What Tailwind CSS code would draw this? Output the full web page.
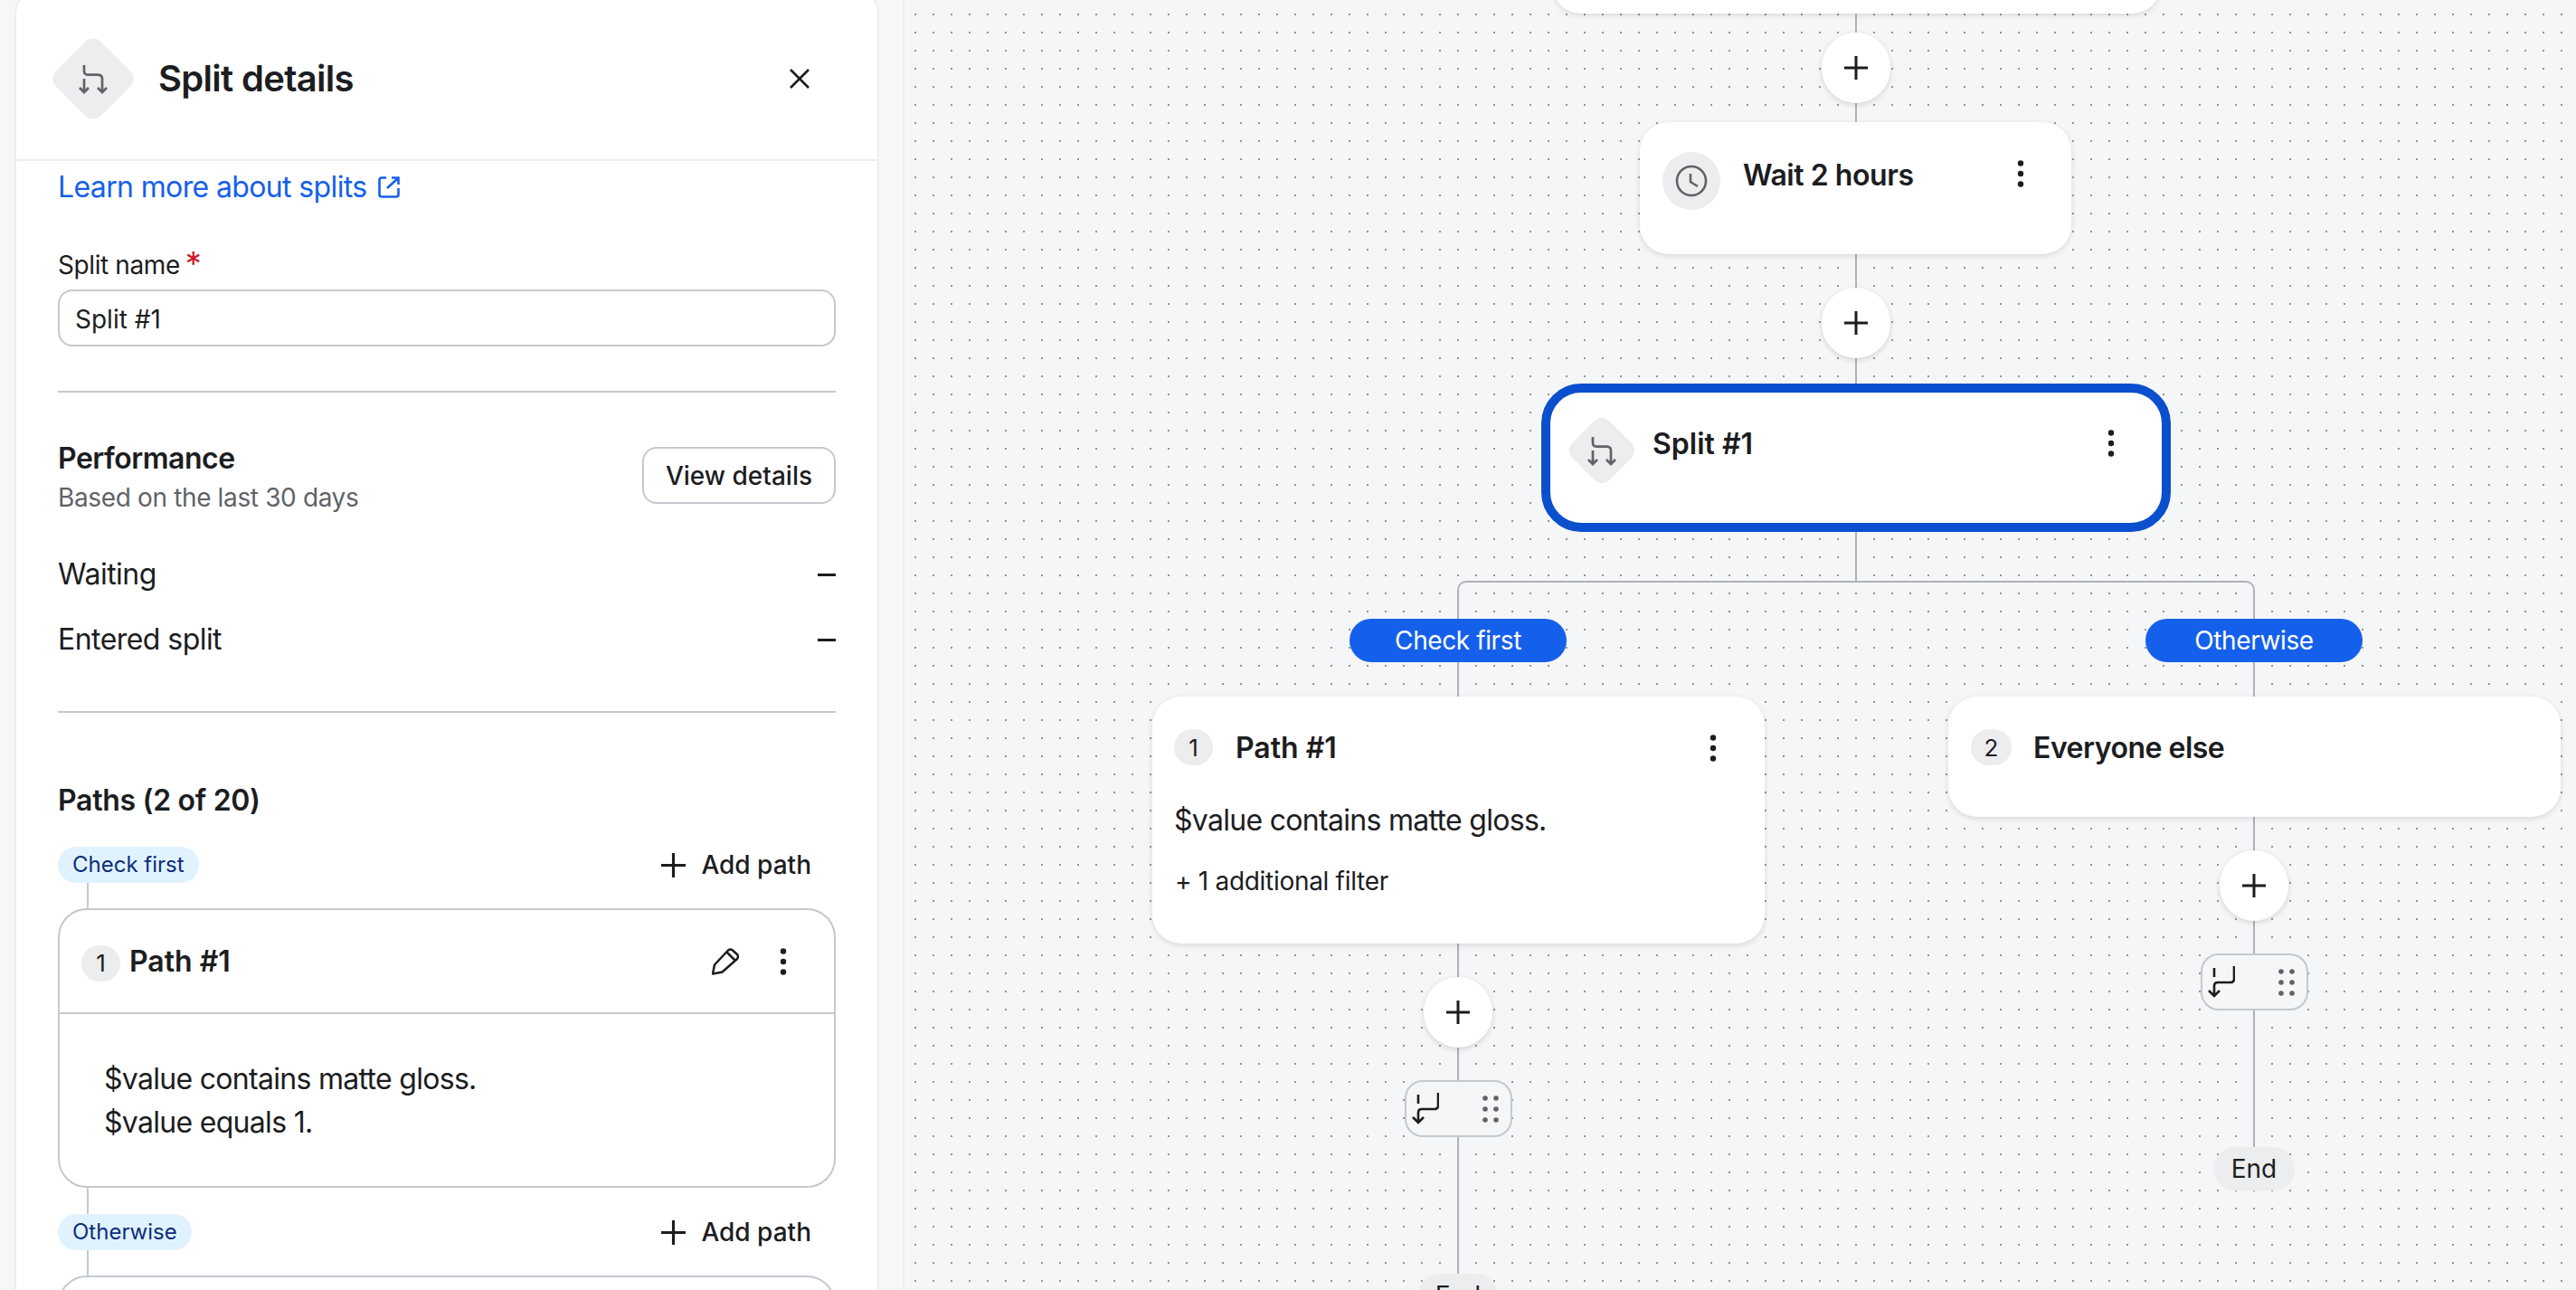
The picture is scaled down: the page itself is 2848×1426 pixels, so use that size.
<!DOCTYPE html>
<html lang="en">
<head>
  <meta charset="UTF-8" />
  <title>Split details</title>
  <script src="https://cdn.jsdelivr.net/npm/@tailwindcss/browser@4"></script>
</head>
<body class="m-0 h-screen overflow-hidden bg-[#f6f7f9] font-['Inter',sans-serif] text-[#1c1d1f]">
  <svg class="hidden">
    <symbol id="split" viewBox="-1 -1 34 34" fill="none" stroke="currentColor" stroke-width="2.7">
      <path d="M6 1V7.7Q6 11.7 11 11.7H21Q26 11.7 26 16V31M6 16V31M1 26L6 31L11 26M21 26L26 31L31 26" />
    </symbol>
    <symbol id="plus" viewBox="0 0 26 26" fill="none" stroke="currentColor" stroke-width="3">
      <path d="M13 0V26M0 13H26" />
    </symbol>
    <symbol id="dots" viewBox="0 0 10 30" fill="currentColor">
      <circle cx="5" cy="3.5" r="3.2" /><circle cx="5" cy="15" r="3.2" /><circle cx="5" cy="26.5" r="3.2" />
    </symbol>
    <symbol id="merge" viewBox="0 0 30 36" fill="none" stroke="currentColor" stroke-width="2.6">
      <path d="M7 2V12M29 0V14Q29 18 25 18H11Q7 18 7 22V33M1 27L7 33L13 27" />
    </symbol>
    <symbol id="grip" viewBox="0 0 18 30" fill="#5f6368">
      <circle cx="3" cy="3" r="2.8" /><circle cx="15" cy="3" r="2.8" />
      <circle cx="3" cy="15" r="2.8" /><circle cx="15" cy="15" r="2.8" />
      <circle cx="3" cy="27" r="2.8" /><circle cx="15" cy="27" r="2.8" />
    </symbol>
  </svg>

  <div class="flex h-screen overflow-hidden">
    <!-- details panel -->
    <div class="w-[1000px] shrink-0 pl-4 border-r-2 border-[#eceef0] overflow-hidden">
      <aside class="w-[956px] -mt-4 h-[1500px] bg-white rounded-t-[32px] border-x-2 border-t-2 border-[#eceef0]">
        <header class="h-[192px] pt-3 pl-[37px] pr-[75px] flex items-center border-b-2 border-[#eceef0]">
          <div class="w-[96px] h-[96px] flex items-center justify-center relative text-[#5f6368]">
            <div class="absolute w-[70px] h-[70px] rotate-45 rounded-xl bg-[#ecedef]"></div>
            <svg class="relative w-[34px] h-[34px]"><use href="#split" /></svg>
          </div>
          <h1 class="ml-[24px] text-[40px] leading-[48px] font-semibold tracking-[-0.7px]">Split details</h1>
          <svg class="ml-auto w-[22px] h-[22px]" viewBox="0 0 22 22" fill="none" stroke="#1c1d1f" stroke-width="2.6"><path d="M1 1L21 21M21 1L1 21" /></svg>
        </header>

        <div class="px-[46px]">
          <a class="mt-[9px] flex items-center gap-3 text-[32px] leading-10 tracking-[-0.63px] text-[#1560eb]">
            Learn more about splits
            <svg class="w-[24px] h-[24px]" viewBox="0 0 24 24" fill="none" stroke="currentColor" stroke-width="2.6"><path d="M9 1.500H4Q1.500 1.500 1.500 4V20Q1.500 22.500 4 22.500H20Q22.500 22.500 22.500 20V13M15 1.500H22.500V9M22 2L10 13" /></svg>
          </a>

          <div class="mt-[48px] text-[28px] leading-9 tracking-[-0.4px] flex">
            Split name<span class="ml-1.5 text-[#d1192a] text-[36px] leading-[32px]">*</span>
          </div>
          <div class="mt-[9px] h-[63px] rounded-2xl border-2 border-[#c4c9cf] pl-[17px] pt-[2px] flex items-center text-[28px]">Split #1</div>
          <div class="mt-[49px] h-[2px] bg-[#c4c9cf]"></div>

          <div class="mt-[53px] flex justify-between items-start">
            <div>
              <div class="text-[32px] leading-10 font-semibold tracking-[-0.5px]">Performance</div>
              <div class="mt-[5px] text-[28px] leading-9 tracking-[-0.36px] text-[#5f6368]">Based on the last 30 days</div>
            </div>
            <button class="mt-[7px] w-[214px] h-[63px] rounded-2xl border-2 border-[#c4c9cf] text-[28px] font-medium">View details</button>
          </div>

          <div class="mt-[47px] flex justify-between items-center text-[32px] leading-10 tracking-[-0.5px]">
            <span>Waiting</span><span class="w-5 h-[3px] bg-[#1c1d1f]"></span>
          </div>
          <div class="mt-[32px] flex justify-between items-center text-[32px] leading-10 tracking-[-0.55px]">
            <span>Entered split</span><span class="w-5 h-[3px] bg-[#1c1d1f]"></span>
          </div>
          <div class="mt-[59px] h-[2px] bg-[#c4c9cf]"></div>

          <div class="mt-[77px] text-[32px] leading-10 font-semibold tracking-[-0.3px]">Paths (2 of 20)</div>

          <div class="mt-[31px] flex justify-between items-center h-10">
            <span class="px-4 h-10 rounded-full bg-[#e1f2ff] text-[#0b2e7a] text-[24px] flex items-center">Check first</span>
            <span class="mr-[27px] flex items-center gap-[17px] text-[28px] font-medium">
              <svg class="w-[27px] h-[27px]"><use href="#plus" /></svg>Add path
            </span>
          </div>
          <div class="ml-[32px] w-[2px] h-[28px] bg-[#c4c9cf]"></div>

          <div class="h-[309px] rounded-[32px] border-2 border-[#c4c9cf]">
            <div class="h-[115px] pl-[24px] pr-[51px] flex items-center border-b-2 border-[#c4c9cf]">
              <span class="w-[43px] h-10 mt-1 rounded-full bg-[#ecedef] text-[26px] flex items-center justify-center">1</span>
              <span class="ml-[10px] text-[32px] font-semibold">Path #1</span>
              <svg class="ml-auto w-[30px] h-[30px]" viewBox="0 0 30 30" fill="none" stroke="#1c1d1f" stroke-width="2.5" stroke-linejoin="round"><path d="M1 28.500L3 18.500L18 2.500Q20.500 0.500 23 2.500L28 7Q30 9.500 28 12L11.500 26.500ZM16.500 4.500L25.500 13.500" /></svg>
              <svg class="ml-[44px] w-[10px] h-[30px]"><use href="#dots" /></svg>
            </div>
            <div class="pl-[49px] pt-[48px] text-[32px] leading-[48px] tracking-[-0.7px]">
              <div>$value contains matte gloss.</div>
              <div>$value equals 1.</div>
            </div>
          </div>

          <div class="ml-[32px] w-[2px] h-[29px] bg-[#c4c9cf]"></div>
          <div class="flex justify-between items-center h-10">
            <span class="px-4 h-10 rounded-full bg-[#e1f2ff] text-[#0b2e7a] text-[24px] flex items-center">Otherwise</span>
            <span class="mr-[27px] flex items-center gap-[17px] text-[28px] font-medium">
              <svg class="w-[27px] h-[27px]"><use href="#plus" /></svg>Add path
            </span>
          </div>
          <div class="ml-[32px] w-[2px] h-[28px] bg-[#c4c9cf]"></div>
          <div class="h-[200px] rounded-[32px] border-2 border-[#c4c9cf]"></div>
        </div>
      </aside>
    </div>

    <!-- canvas: nodes sit at their own coordinates -->
    <main class="relative flex-1 overflow-hidden bg-[#f4f6f8] bg-[radial-gradient(circle,#8f949b_1.2px,transparent_1.4px)] bg-[length:20px_20px] bg-[position:2px_6px]">
      <div class="absolute left-[1051px] top-0 w-[2px] h-[424px] bg-[#aeb2b9]"></div>
      <div class="absolute left-[1051px] top-[588px] w-[2px] h-[56px] bg-[#aeb2b9]"></div>
      <div class="absolute left-[611px] top-[642px] w-[882px] h-[60px] rounded-t-[10px] border-x-2 border-t-2 border-[#aeb2b9]"></div>
      <div class="absolute left-[611px] top-[700px] w-[2px] h-[708px] bg-[#aeb2b9]"></div>
      <div class="absolute left-[1491px] top-[700px] w-[2px] h-[570px] bg-[#aeb2b9]"></div>

      <div class="absolute left-[716px] -top-[60px] w-[673px] h-[75px] rounded-[32px] bg-white shadow-[0_2px_6px_rgba(0,0,0,0.12)]"></div>

      <button class="absolute left-[1014px] top-[36px] w-[76px] h-[78px] rounded-full bg-white shadow-[0_2px_6px_rgba(0,0,0,0.14)] flex items-center justify-center"><svg class="w-[26px] h-[26px]"><use href="#plus" /></svg></button>

      <div class="absolute left-[813px] top-[135px] w-[477px] h-[146px] rounded-[32px] bg-white shadow-[0_2px_6px_rgba(0,0,0,0.12)]">
        <div class="absolute left-[25px] top-[33px] w-16 h-16 rounded-full bg-[#ecedef] flex items-center justify-center">
          <svg class="w-[36px] h-[36px]" viewBox="0 0 36 36" fill="none" stroke="#5f6368" stroke-width="2.6"><circle cx="18" cy="18" r="16" /><path d="M17 10V19L25 24" /></svg>
        </div>
        <span class="absolute left-[114px] top-[39px] text-[32px] leading-10 font-semibold tracking-[-0.45px]">Wait 2 hours</span>
        <svg class="absolute left-[416px] top-[42px] w-[10px] h-[30px]"><use href="#dots" /></svg>
      </div>

      <button class="absolute left-[1014px] top-[318px] w-[76px] h-[78px] rounded-full bg-white shadow-[0_2px_6px_rgba(0,0,0,0.14)] flex items-center justify-center"><svg class="w-[26px] h-[26px]"><use href="#plus" /></svg></button>

      <div class="absolute left-[704px] top-[424px] w-[696px] h-[164px] rounded-[44px] bg-white border-[10px] border-[#0b4fce] text-[#5f6368]">
        <div class="absolute left-[19px] top-[26px] w-[76px] h-[76px] flex items-center justify-center">
          <div class="absolute w-[58px] h-[58px] rotate-45 rounded-xl bg-[#ecedef]"></div>
          <svg class="relative w-[34px] h-[34px]"><use href="#split" /></svg>
        </div>
        <span class="absolute left-[113px] top-[37px] text-[32px] leading-10 font-semibold text-[#1c1d1f]">Split #1</span>
        <svg class="absolute left-[615px] top-[41px] w-[10px] h-[30px] text-[#1c1d1f]"><use href="#dots" /></svg>
      </div>

      <span class="absolute left-[492px] top-[684px] w-[240px] h-[48px] rounded-full bg-[#1560eb] text-white text-[28px] tracking-[-0.4px] flex items-center justify-center">Check first</span>
      <span class="absolute left-[1372px] top-[684px] w-[240px] h-[48px] rounded-full bg-[#1560eb] text-white text-[28px] tracking-[-0.4px] flex items-center justify-center">Otherwise</span>

      <div class="absolute left-[274px] top-[770px] w-[677px] h-[273px] rounded-[32px] bg-white shadow-[0_2px_6px_rgba(0,0,0,0.12)]">
        <span class="absolute left-[24px] top-[36px] w-[43px] h-10 rounded-full bg-[#ecedef] text-[26px] flex items-center justify-center">1</span>
        <span class="absolute left-[92px] top-[37px] text-[32px] leading-10 font-semibold">Path #1</span>
        <svg class="absolute left-[615px] top-[42px] w-[10px] h-[30px]"><use href="#dots" /></svg>
        <span class="absolute left-[24px] top-[117px] text-[32px] leading-10 tracking-[-0.7px]">$value contains matte gloss.</span>
        <span class="absolute left-[25px] top-[186px] text-[28px] leading-9 tracking-[-0.3px]">+ 1 additional filter</span>
      </div>

      <div class="absolute left-[1154px] top-[770px] w-[677px] h-[133px] rounded-[32px] bg-white shadow-[0_2px_6px_rgba(0,0,0,0.12)]">
        <span class="absolute left-[25px] top-[36px] w-[45px] h-10 rounded-full bg-[#ecedef] text-[26px] flex items-center justify-center">2</span>
        <span class="absolute left-[94px] top-[37px] text-[32px] leading-10 font-semibold tracking-[-0.5px]">Everyone else</span>
      </div>

      <button class="absolute left-[574px] top-[1080px] w-[76px] h-[78px] rounded-full bg-white shadow-[0_2px_6px_rgba(0,0,0,0.14)] flex items-center justify-center"><svg class="w-[26px] h-[26px]"><use href="#plus" /></svg></button>
      <button class="absolute left-[1454px] top-[940px] w-[76px] h-[78px] rounded-full bg-white shadow-[0_2px_6px_rgba(0,0,0,0.14)] flex items-center justify-center"><svg class="w-[26px] h-[26px]"><use href="#plus" /></svg></button>

      <div class="absolute left-[553px] top-[1194px] w-[119px] h-[63px] rounded-[20px] bg-[#f4f6f8] border-2 border-[#c3c9d0]">
        <svg class="absolute left-[6px] top-[12px] w-[30px] h-[36px]"><use href="#merge" /></svg>
        <svg class="absolute left-[84px] top-[15px] w-[18px] h-[30px]"><use href="#grip" /></svg>
      </div>
      <div class="absolute left-[1433px] top-[1054px] w-[119px] h-[63px] rounded-[20px] bg-[#f4f6f8] border-2 border-[#c3c9d0]">
        <svg class="absolute left-[6px] top-[12px] w-[30px] h-[36px]"><use href="#merge" /></svg>
        <svg class="absolute left-[84px] top-[15px] w-[18px] h-[30px]"><use href="#grip" /></svg>
      </div>

      <span class="absolute left-[568px] top-[1408px] w-[88px] h-[48px] rounded-full bg-[#ecedef] text-[28px] flex items-center justify-center">End</span>
      <span class="absolute left-[1447px] top-[1268px] w-[90px] h-[48px] rounded-full bg-[#ecedef] text-[28px] flex items-center justify-center">End</span>
    </main>
  </div>
</body>
</html>
